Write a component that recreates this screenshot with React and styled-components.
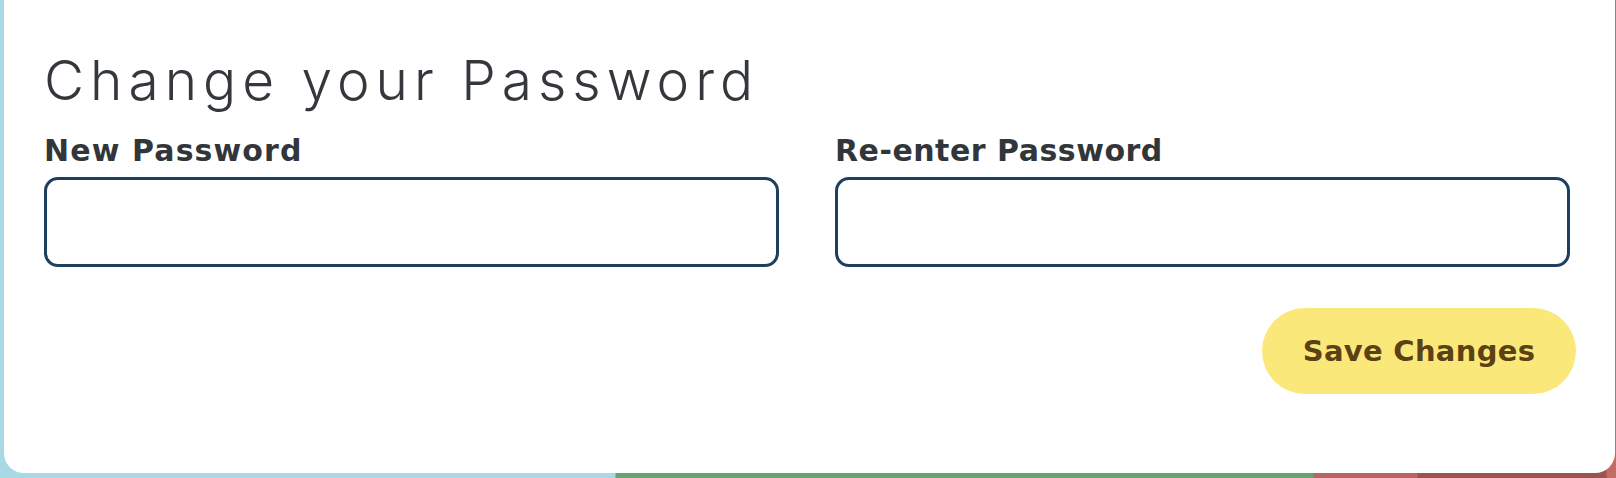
import React from "react";
import styled, { createGlobalStyle } from "styled-components";

const Global = createGlobalStyle`
  html, body {
    margin: 0;
    padding: 0;
  }
  body {
    width: 1616px;
    height: 478px;
    overflow: hidden;
    font-family: "DejaVu Sans", "Noto Sans", sans-serif;
  }
`;

const Page = styled.div`
  box-sizing: border-box;
  width: 1616px;
  height: 478px;
  padding: 0 1px 5px 4px;
  background:
    linear-gradient(
      to right,
      #a9d9e5 0px,
      #a9d9e5 615px,
      #62a472 616px,
      #62a472 1313px,
      #b96660 1314px,
      #b96660 1417px,
      #9b5551 1418px,
      #9b5551 1606px,
      #c46b65 1607px
    );
  display: flex;
`;

const Card = styled.section`
  box-sizing: border-box;
  flex: 1;
  height: 473px;
  background: #ffffff;
  border-radius: 0 0 20px 20px;
  padding: 47px 39px 0 40px;
  display: flex;
  flex-direction: column;
`;

const Title = styled.h2`
  margin: 0;
  font-family: Inter, "Noto Sans", sans-serif;
  font-weight: 300;
  font-size: 55px;
  line-height: 66px;
  color: #34383d;
  letter-spacing: 6px;
`;

const Fields = styled.div`
  display: grid;
  grid-template-columns: 735px 735px;
  column-gap: 56px;
  margin-top: 20px;
`;

const Field = styled.label`
  display: flex;
  flex-direction: column;
  gap: 8px;
`;

const Label = styled.span`
  font-family: "DejaVu Sans", sans-serif;
  font-weight: 700;
  font-size: 30px;
  line-height: 36px;
  letter-spacing: ${(p) => p.$spacing || "0.5px"};
  color: #32363b;
`;

const Input = styled.input`
  box-sizing: border-box;
  width: 100%;
  height: 90px;
  border: 3px solid #1f3f5f;
  border-radius: 14px;
  background: #ffffff;
  outline: none;
  padding: 0 16px;
  font-size: 24px;
`;

const Actions = styled.div`
  display: flex;
  justify-content: flex-end;
  margin-top: 41px;
`;

const SaveButton = styled.button`
  box-sizing: border-box;
  width: 314px;
  height: 86px;
  border: none;
  border-radius: 43px;
  background: #fbe87b;
  color: #5b4214;
  font-family: "DejaVu Sans", sans-serif;
  font-weight: 700;
  font-size: 29px;
  letter-spacing: 0.3px;
  cursor: pointer;
  display: flex;
  align-items: center;
  justify-content: center;
`;

export default function App() {
  return (
    <>
      <Global />
      <Page>
        <Card>
          <Title>Change your Password</Title>
          <Fields>
            <Field>
              <Label $spacing="1.1px">New Password</Label>
              <Input type="password" />
            </Field>
            <Field>
              <Label>Re-enter Password</Label>
              <Input type="password" />
            </Field>
          </Fields>
          <Actions>
            <SaveButton type="button">Save Changes</SaveButton>
          </Actions>
        </Card>
      </Page>
    </>
  );
}
